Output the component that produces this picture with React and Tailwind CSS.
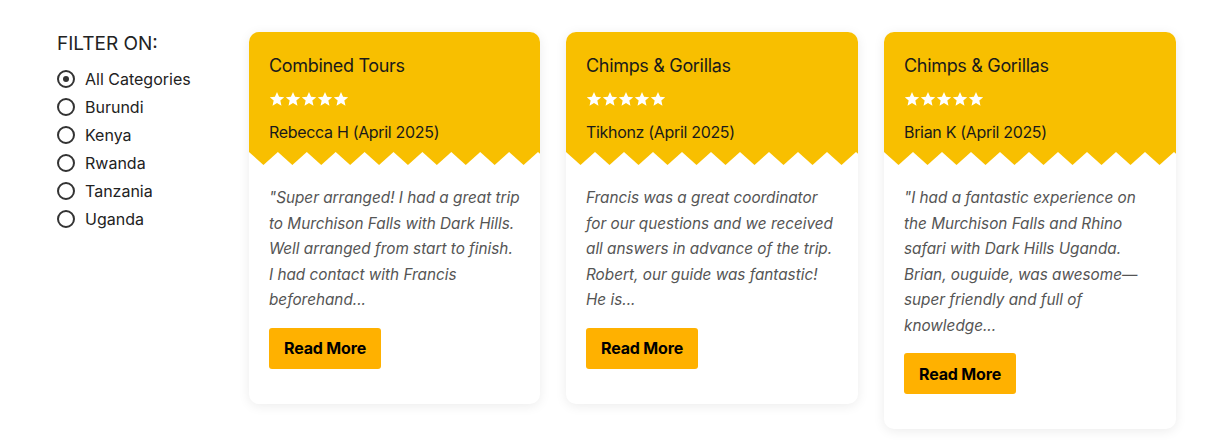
const categories = ["All Categories", "Burundi", "Kenya", "Rwanda", "Tanzania", "Uganda"];

const reviews = [
  {
    tour: "Combined Tours",
    author: "Rebecca H (April 2025)",
    lines: [
      "\"Super arranged! I had a great trip",
      "to Murchison Falls with Dark Hills.",
      "Well arranged from start to finish.",
      "I had contact with Francis",
      "beforehand...",
    ],
  },
  {
    tour: "Chimps & Gorillas",
    author: "Tikhonz (April 2025)",
    lines: [
      "Francis was a great coordinator",
      "for our questions and we received",
      "all answers in advance of the trip.",
      "Robert, our guide was fantastic!",
      "He is...",
    ],
  },
  {
    tour: "Chimps & Gorillas",
    author: "Brian K (April 2025)",
    lines: [
      "\"I had a fantastic experience on",
      "the Murchison Falls and Rhino",
      "safari with Dark Hills Uganda.",
      "Brian, ouguide, was awesome—",
      "super friendly and full of",
      "knowledge...",
    ],
  },
];

function Star() {
  return (
    <svg width="16" height="16" viewBox="0 0 24 24" fill="white">
      <path d="M12 1.5l3.1 7.1 7.7.7-5.8 5.1 1.7 7.6L12 18l-6.7 4 1.7-7.6-5.8-5.1 7.7-.7z" />
    </svg>
  );
}

function Zigzag() {
  // yellow teeth pointing down, 29px period
  const teeth = [];
  for (let i = 0; i < 11; i++) {
    const x = i * 29;
    teeth.push(`${x},0 ${x + 14.5},13 ${x + 29},0`);
  }
  return (
    <svg className="block w-full h-[13px]" viewBox="0 0 292 13" preserveAspectRatio="none">
      {teeth.map((p, i) => (
        <polygon key={i} points={p} fill="#f8bf00" />
      ))}
    </svg>
  );
}

function ReviewCard({ review }) {
  return (
    <div className="bg-white rounded-[10px] overflow-hidden shadow-[0_2px_12px_rgba(0,0,0,0.08)]">
      <div className="bg-[#f8bf00] px-5 pt-5 pb-2 text-[#1a1a1a] tracking-[-0.02em]">
        <h3 className="text-lg leading-7">{review.tour}</h3>
        <div className="flex items-center mt-[7px] mb-[9px] h-6">
          <Star /><Star /><Star /><Star /><Star />
        </div>
        <p className="text-base leading-6">{review.author}</p>
      </div>
      <Zigzag />
      <div className="px-5 pt-5 pb-[35px]">
        <p className="italic text-[#555] text-[15.3px] leading-[25.5px] whitespace-nowrap">
          {review.lines.map((l, i) => (
            <span key={i} className="block">{l}</span>
          ))}
        </p>
        <button className="mt-[15px] bg-[#ffb100] rounded-[3px] h-[41px] px-[15px] font-bold text-base text-black tracking-[-0.01em]">
          Read More
        </button>
      </div>
    </div>
  );
}

export default function App() {
  return (
    <div className="min-h-[443px] bg-white flex pt-8 pl-[57px] font-['Inter',sans-serif]">
      <div className="w-[192px] shrink-0">
        <h2 className="text-[19px] leading-6 text-[#222] uppercase">Filter On:</h2>
        <ul className="mt-[9px]">
          {categories.map((c, i) => (
            <li key={c} className="flex items-center gap-[10px] h-7 text-base text-[#222]">
              <span className="w-[18px] h-[18px] rounded-full border-2 border-[#333] flex items-center justify-center">
                {i === 0 && <span className="w-[6px] h-[6px] rounded-full bg-[#333]" />}
              </span>
              {c}
            </li>
          ))}
        </ul>
      </div>
      <div className="grid grid-cols-[291px_292px_292px] gap-[26px] items-start">
        {reviews.map((r, i) => (
          <ReviewCard key={i} review={r} />
        ))}
      </div>
    </div>
  );
}
